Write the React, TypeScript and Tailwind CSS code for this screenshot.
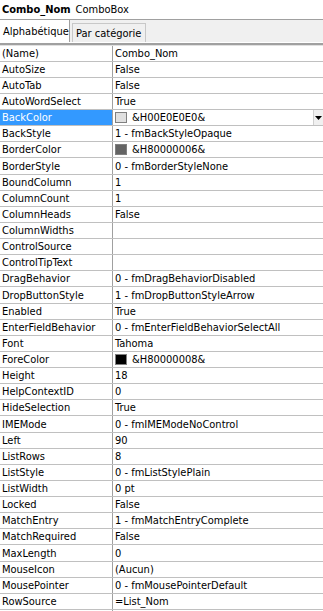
import React from "react";

type Row = { name: string; value: string; swatch?: string };

const rows: Row[] = [
  { name: "(Name)", value: "Combo_Nom" },
  { name: "AutoSize", value: "False" },
  { name: "AutoTab", value: "False" },
  { name: "AutoWordSelect", value: "True" },
  { name: "BackColor", value: "&H00E0E0E0&", swatch: "#e0e0e0" },
  { name: "BackStyle", value: "1 - fmBackStyleOpaque" },
  { name: "BorderColor", value: "&H80000006&", swatch: "#646464" },
  { name: "BorderStyle", value: "0 - fmBorderStyleNone" },
  { name: "BoundColumn", value: "1" },
  { name: "ColumnCount", value: "1" },
  { name: "ColumnHeads", value: "False" },
  { name: "ColumnWidths", value: "" },
  { name: "ControlSource", value: "" },
  { name: "ControlTipText", value: "" },
  { name: "DragBehavior", value: "0 - fmDragBehaviorDisabled" },
  { name: "DropButtonStyle", value: "1 - fmDropButtonStyleArrow" },
  { name: "Enabled", value: "True" },
  { name: "EnterFieldBehavior", value: "0 - fmEnterFieldBehaviorSelectAll" },
  { name: "Font", value: "Tahoma" },
  { name: "ForeColor", value: "&H80000008&", swatch: "#000000" },
  { name: "Height", value: "18" },
  { name: "HelpContextID", value: "0" },
  { name: "HideSelection", value: "True" },
  { name: "IMEMode", value: "0 - fmIMEModeNoControl" },
  { name: "Left", value: "90" },
  { name: "ListRows", value: "8" },
  { name: "ListStyle", value: "0 - fmListStylePlain" },
  { name: "ListWidth", value: "0 pt" },
  { name: "Locked", value: "False" },
  { name: "MatchEntry", value: "1 - fmMatchEntryComplete" },
  { name: "MatchRequired", value: "False" },
  { name: "MaxLength", value: "0" },
  { name: "MouseIcon", value: "(Aucun)" },
  { name: "MousePointer", value: "0 - fmMousePointerDefault" },
  { name: "RowSource", value: "=List_Nom" },
  { name: "SelectionMargin", value: "True" },
  { name: "ShowDropButtonWhen", value: "2 - fmShowDropButtonWhenAlways" },
];

export default function App() {
  return (
    <div
      className="w-[323px] h-[611px] overflow-hidden bg-white text-[11px] text-black leading-none"
      style={{ fontFamily: '"DejaVu Sans Condensed", "DejaVu Sans", sans-serif' }}
    >
      {/* title */}
      <div className="h-[20px] flex items-center px-[2px] border-b border-[#a0a0a0] whitespace-nowrap">
        <span className="font-bold">Combo_Nom</span>
        <span className="ml-[5px]">ComboBox</span>
      </div>
      {/* tabs */}
      <div className="h-[22px] bg-[#f0f0f0] flex items-end whitespace-nowrap">
        <div className="h-[22px] w-[70px] bg-white border-r border-[#a0a0a0] flex items-center px-[3px]">
          Alphabétique
        </div>
        <div className="h-[19px] ml-[2px] w-[74px] border border-b-0 border-[#c8c8c8] flex items-center px-[3px]">
          Par catégorie
        </div>
      </div>
      {/* grid */}
      <div className="border-t-[2px] border-[#a0a0a0] mt-[1px]">
        <div className="border-t border-[#e0e0e0]">
          {rows.map((r, i) => {
            const sel = r.name === "BackColor";
            const tall = i % 8 === 7;
            return (
              <div
                key={r.name}
                className={
                  "flex border-b border-[#c0c0c0] whitespace-nowrap " +
                  (tall ? "h-[17px]" : "h-[16px]")
                }
              >
                <div
                  className={
                    "w-[113px] shrink-0 border-r border-[#a0a0a0] flex items-center px-[2px] " +
                    (sel ? "bg-[#3399ff] text-white" : "")
                  }
                >
                  {r.name}
                </div>
                <div className="flex-1 flex items-center pl-[2px] relative">
                  {r.swatch && (
                    <span
                      className="w-[12px] h-[11px] border border-[#808080] mr-[5px] shrink-0"
                      style={{ backgroundColor: r.swatch }}
                    />
                  )}
                  <span>{r.value}</span>
                  {sel && (
                    <div className="absolute right-0 top-0 h-[15px] w-[10px] bg-[#f0f0f0] border-l border-[#d0d0d0] flex items-center justify-center">
                      <svg width="7" height="4" viewBox="0 0 7 4">
                        <polygon points="0,0 7,0 3.5,4" fill="#000" />
                      </svg>
                    </div>
                  )}
                </div>
              </div>
            );
          })}
        </div>
      </div>
    </div>
  );
}
